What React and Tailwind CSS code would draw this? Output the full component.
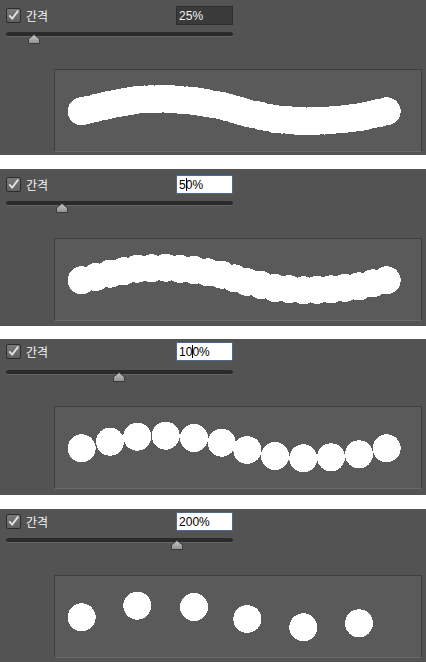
import React from "react";

// centres at 100% spacing, relative to the preview box (incl. border)
const BASE = [
  [27.7, 42.3], [56, 35.7], [83.3, 30.7], [111.7, 29.7], [140, 32], [167.7, 36.7],
  [193.3, 44], [221, 50], [249.3, 52.3], [277, 51.3], [305, 48.3], [332.7, 42.3],
];

function dabs(mode) {
  if (mode === "200") return BASE.filter((_, i) => i % 2 === 0);
  const steps = mode === "25" ? 4 : mode === "50" ? 2 : 1;
  const out = [];
  for (let i = 0; i < BASE.length - 1; i++) {
    for (let s = 0; s < steps; s++) {
      const t = s / steps;
      out.push([
        BASE[i][0] + (BASE[i + 1][0] - BASE[i][0]) * t,
        BASE[i][1] + (BASE[i + 1][1] - BASE[i][1]) * t,
      ]);
    }
  }
  out.push(BASE[BASE.length - 1]);
  return out;
}

const PANELS = [
  { mode: "25", value: "25", caret: null, dark: true, h: "h-[155px]", pt: "pt-[6px]", trackMt: "mt-[7px]", boxMt: "mt-[32px]", thumb: "left-[22px]" },
  { mode: "50", value: "50", caret: 1, dark: false, h: "h-[157px]", pt: "pt-[6px]", trackMt: "mt-[7px]", boxMt: "mt-[32px]", thumb: "left-[50px]" },
  { mode: "100", value: "100", caret: 2, dark: false, h: "h-[156px]", pt: "pt-[3px]", trackMt: "mt-[9px]", boxMt: "mt-[31px]", thumb: "left-[107px]" },
  { mode: "200", value: "200", caret: null, dark: false, h: "h-[153px]", pt: "pt-[3px]", trackMt: "mt-[7px]", boxMt: "mt-[32px]", thumb: "left-[165px]" },
];

function CheckBox() {
  return (
    <svg width="15" height="15" viewBox="0 0 15 15" className="block">
      <defs>
        <linearGradient id="cbg" x1="0" y1="0" x2="0" y2="1">
          <stop offset="0" stopColor="#7a7a7a" />
          <stop offset="1" stopColor="#606060" />
        </linearGradient>
      </defs>
      <rect x="0.5" y="0.5" width="14" height="14" rx="1.5" fill="url(#cbg)" stroke="#2c2c2c" />
      <path d="M3.2 7.4 L6.2 10.6 L12.2 2.6" fill="none" stroke="#e4e4e4" strokeWidth="1.8" />
    </svg>
  );
}

function Thumb() {
  return (
    <svg width="12" height="10" viewBox="0 0 12 10" className="block">
      <defs>
        <linearGradient id="thg" x1="0" y1="0" x2="0" y2="1">
          <stop offset="0" stopColor="#c8c8c8" />
          <stop offset="1" stopColor="#8e8e8e" />
        </linearGradient>
      </defs>
      <path d="M6 0.5 L11.5 5 L11.5 9.5 L0.5 9.5 L0.5 5 Z" fill="url(#thg)" stroke="#3a3a3a" />
    </svg>
  );
}

function ValueBox({ value, caret, dark }) {
  const chars = (value + "%").split("");
  return (
    <div
      className={
        dark
          ? "ml-auto mr-[193px] flex h-[19px] w-[57px] items-center border border-[#2e2e2e] bg-[#3a3a3a] pl-[2px] text-[12px] text-[#f2f2f2]"
          : "ml-auto mr-[193px] flex h-[19px] w-[57px] items-center border border-[#4b6897] bg-white pl-[2px] text-[12px] text-black"
      }
      style={{ fontFamily: '"Liberation Sans", Arial, sans-serif' }}
    >
      {chars.map((c, i) => (
        <React.Fragment key={i}>
          {caret === i && <span className="-mr-px inline-block h-[13px] w-px bg-black" />}
          <span>{c}</span>
        </React.Fragment>
      ))}
    </div>
  );
}

function Panel({ p }) {
  const pts = dabs(p.mode);
  return (
    <div className={`${p.h} ${p.pt} overflow-hidden bg-[#535353]`}>
      <div className="flex h-[19px] items-center pl-[6px]">
        <CheckBox />
        <span
          className="ml-[5px] text-[12px] text-[#f4f4f4]"
          style={{ fontFamily: '"Noto Sans CJK KR", "Noto Sans", sans-serif' }}
        >
          간격
        </span>
        <ValueBox value={p.value} caret={p.caret} dark={p.dark} />
      </div>
      <div className={`${p.trackMt} relative ml-[6px] h-[5px] w-[227px] rounded-full border-b border-[#666] bg-[#2a2a2a]`}>
        <div className={`absolute top-[2px] ${p.thumb}`}>
          <Thumb />
        </div>
      </div>
      <div className={`${p.boxMt} ml-[54px] mr-[4px] h-[83px] border border-[#3e3e3e] border-b-[#6a6a6a] bg-[#5a5a5a]`}>
        <svg width="366" height="81" viewBox="1 1 366 81" className="block" shapeRendering="crispEdges">
          {pts.map(([x, y], i) => (
            <circle key={i} cx={x} cy={y} r="14" fill="#ffffff" />
          ))}
        </svg>
      </div>
    </div>
  );
}

export default function App() {
  return (
    <div className="flex h-[662px] w-[426px] flex-col bg-white">
      <Panel p={PANELS[0]} />
      <div className="h-[14px]" />
      <Panel p={PANELS[1]} />
      <div className="h-[13px]" />
      <Panel p={PANELS[2]} />
      <div className="h-[14px]" />
      <Panel p={PANELS[3]} />
    </div>
  );
}
